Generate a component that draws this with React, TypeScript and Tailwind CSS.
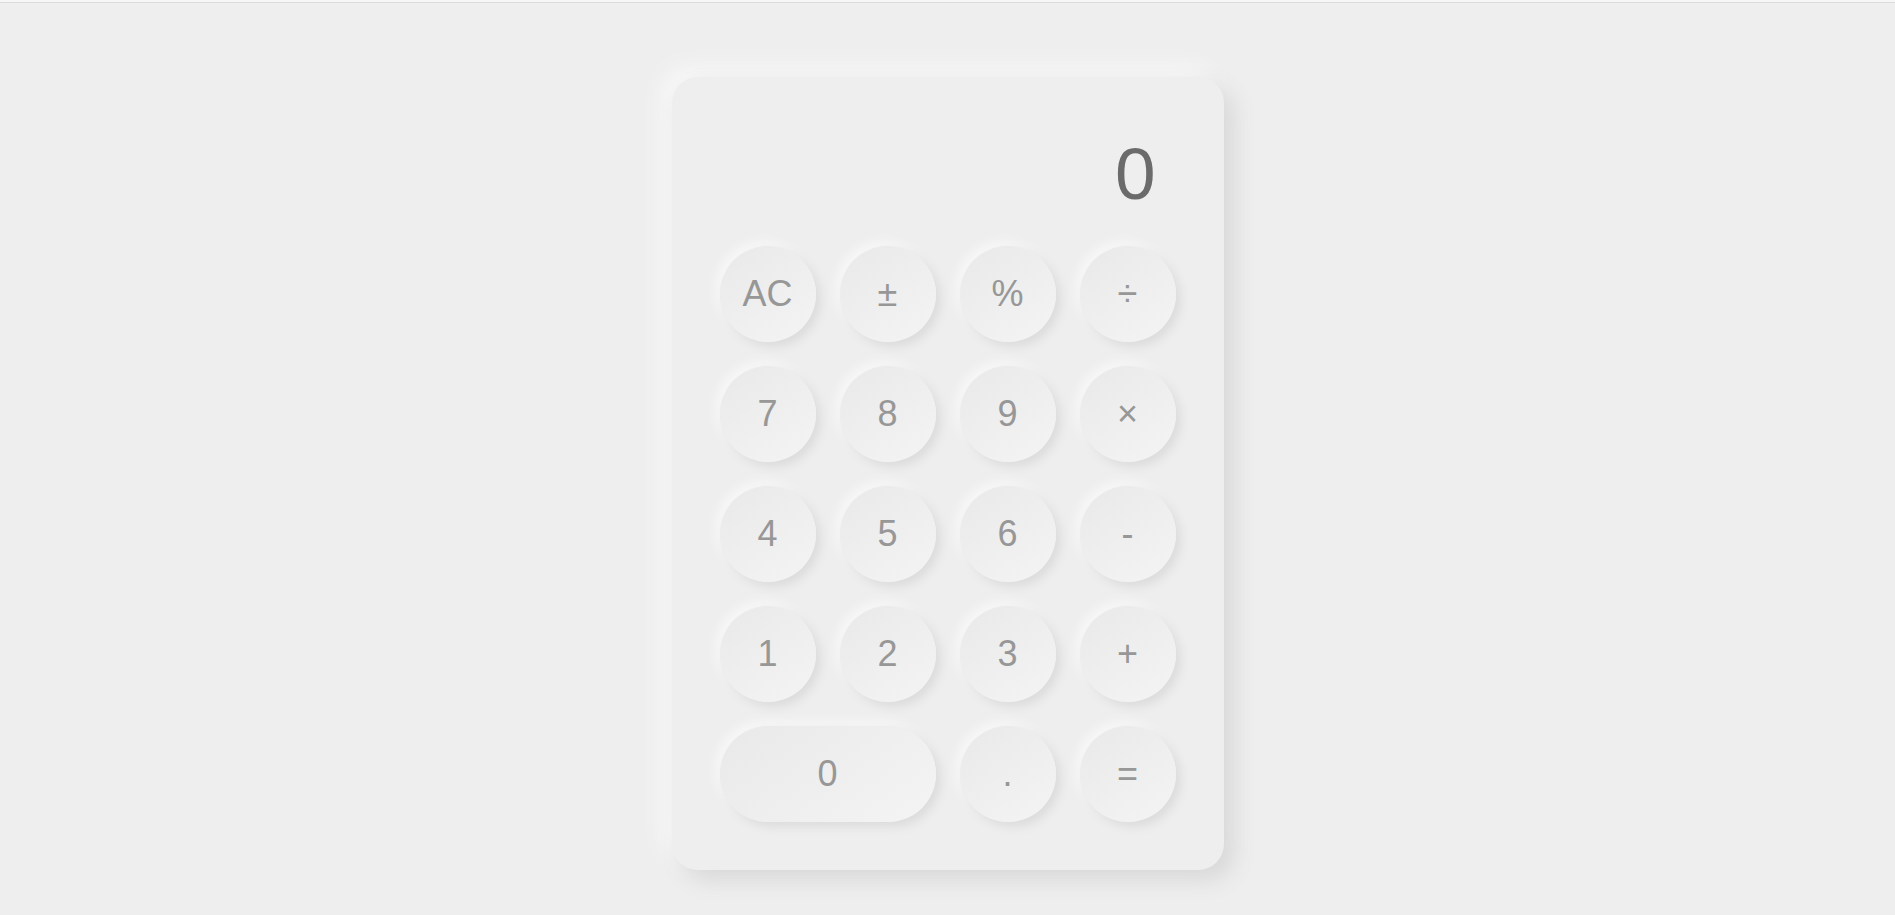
import React, { useState } from "react";

const keys: { label: string; wide?: boolean }[] = [
  { label: "AC" },
  { label: "±" },
  { label: "%" },
  { label: "÷" },
  { label: "7" },
  { label: "8" },
  { label: "9" },
  { label: "×" },
  { label: "4" },
  { label: "5" },
  { label: "6" },
  { label: "-" },
  { label: "1" },
  { label: "2" },
  { label: "3" },
  { label: "+" },
  { label: "0", wide: true },
  { label: "." },
  { label: "=" },
];

export default function App(): JSX.Element {
  const [display] = useState<string>("0");

  return (
    <div className="h-screen overflow-hidden bg-[#eeeeee] font-['Liberation_Sans',Arial,sans-serif]">
      {/** thin top edge */}
      <div className="h-[2px] bg-[#f6f6f6]" />
      <div className="h-px bg-[#dcdcdc]" />

      <div className="flex justify-center pt-[74px]">
        <div className="w-[552px] p-12 rounded-[26px] bg-[#eeeeee] shadow-[10px_10px_22px_#d8d8d8,-10px_-10px_22px_#f8f8f8]">
          {/** Display */}
          <div className="h-[97px] mb-6 pr-[20px] flex items-center justify-end text-[73px] leading-none text-[#6b6b6b]">
            {display}
          </div>

          {/** Keypad */}
          <div className="grid grid-cols-4 gap-6">
            {keys.map((k) => (
              <button
                key={k.label}
                type="button"
                className={
                  (k.wide ? "col-span-2 " : "") +
                  "h-24 rounded-full flex items-center justify-center text-4xl text-[#979797] bg-linear-145 from-[#e9e9e9] to-[#f4f4f4] shadow-[5px_5px_10px_#dcdcdc,-5px_-5px_10px_#f7f7f7]"
                }
              >
                {k.label}
              </button>
            ))}
          </div>
        </div>
      </div>
    </div>
  );
}
